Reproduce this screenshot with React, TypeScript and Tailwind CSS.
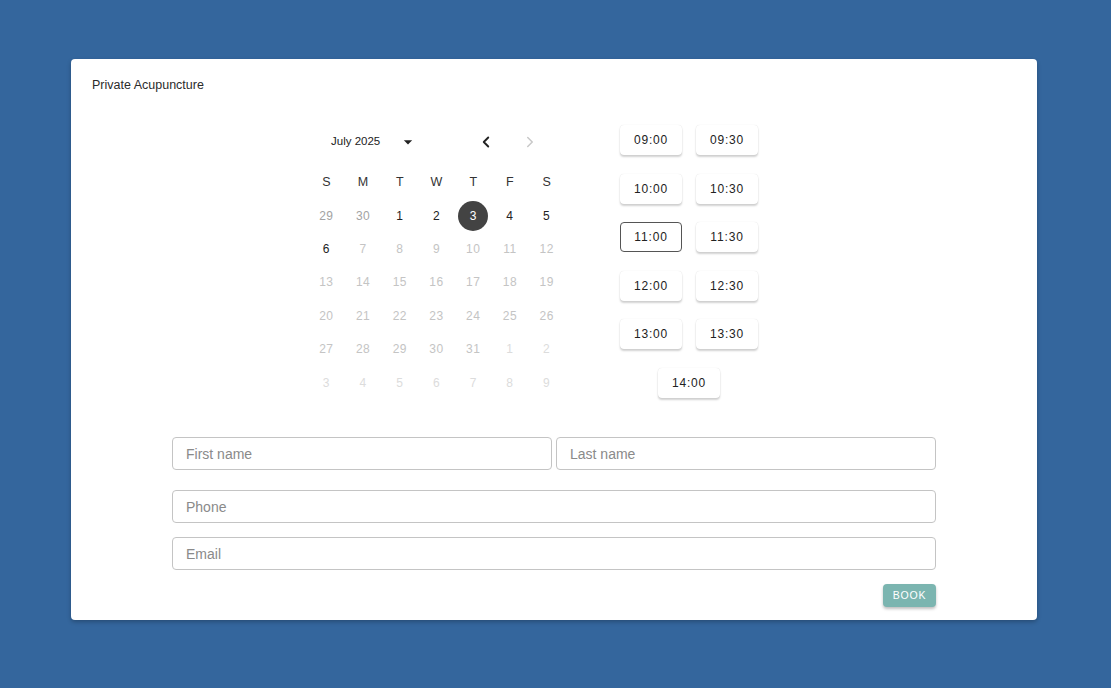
import { ChevronLeft, ChevronRight } from "lucide-react";

const weekDays = ["S", "M", "T", "W", "T", "F", "S"];

type Day = { n: number; tone: "prev" | "active" | "disabled" | "next" | "selected" };

const weeks: Day[][] = [
    [
        { n: 29, tone: "prev" },
        { n: 30, tone: "prev" },
        { n: 1, tone: "active" },
        { n: 2, tone: "active" },
        { n: 3, tone: "selected" },
        { n: 4, tone: "active" },
        { n: 5, tone: "active" },
    ],
    [
        { n: 6, tone: "active" },
        ...[7, 8, 9, 10, 11, 12].map((n) => ({ n, tone: "disabled" as const })),
    ],
    [13, 14, 15, 16, 17, 18, 19].map((n) => ({ n, tone: "disabled" as const })),
    [20, 21, 22, 23, 24, 25, 26].map((n) => ({ n, tone: "disabled" as const })),
    [
        ...[27, 28, 29, 30, 31].map((n) => ({ n, tone: "disabled" as const })),
        { n: 1, tone: "next" },
        { n: 2, tone: "next" },
    ],
    [3, 4, 5, 6, 7, 8, 9].map((n) => ({ n, tone: "next" as const })),
];

const toneClass: Record<Day["tone"], string> = {
    prev: "text-[#a3a3a3]",
    active: "text-[#222]",
    disabled: "text-[#c4c4c4]",
    next: "text-[#dcdcdc]",
    selected: "text-white",
};

const slots = ["09:00", "09:30", "10:00", "10:30", "11:00", "11:30", "12:00", "12:30", "13:00", "13:30"];

function Slot({ time, active }: { time: string; active?: boolean }) {
    return (
        <button
            className={
                "w-[62px] h-[30px] rounded-[4px] bg-white text-[12px] tracking-[0.07em] text-[#222] " +
                (active
                    ? "border border-[#555]"
                    : "shadow-[0_2px_2px_rgba(0,0,0,0.18),0_0_1px_rgba(0,0,0,0.15)]")
            }
        >
            {time}
        </button>
    );
}

function Field({ label }: { label: string }) {
    return (
        <input
            placeholder={label}
            className="w-full h-[33px] px-[13px] border border-[#c4c4c4] rounded-[4px] text-[14px] text-[#333] placeholder:text-[#8a8a8a] outline-none bg-white"
        />
    );
}

export default function App() {
    return (
        <div
            className="min-h-[688px] w-full bg-[#34669d] pt-[59px] pl-[71px]"
            style={{ fontFamily: '"Liberation Sans", Arial, sans-serif' }}
        >
            <div className="w-[966px] h-[561px] bg-white rounded-[4px] shadow-[0_2px_4px_rgba(0,0,0,0.25)] pt-[18px]">
                <div className="pl-[21px] text-[12.5px] leading-[16px] text-[#2b2b2b]">Private Acupuncture</div>

                <div className="flex mt-[32px] ml-[237px]">
                    {/* calendar */}
                    <div className="w-[257px]">
                        <div className="h-[34px] flex items-center text-[#222]">
                            <span className="ml-[23px] text-[11.5px]">July 2025</span>
                            <svg viewBox="0 0 24 24" className="w-[20px] h-[20px] ml-[18px] fill-[#222]">
                                <path d="M7 10l5 5 5-5z" />
                            </svg>
                            <ChevronLeft className="w-[18px] h-[18px] ml-[59px] text-[#222]" strokeWidth={2.5} />
                            <ChevronRight className="w-[18px] h-[18px] ml-[26px] text-[#c8c8c8]" strokeWidth={2} />
                        </div>
                        <div className="grid grid-cols-7 mt-[6px] h-[34px] items-center text-[12.5px] text-[#333]">
                            {weekDays.map((d, i) => (
                                <div key={i} className="text-center">{d}</div>
                            ))}
                        </div>
                        {weeks.map((week, wi) => (
                            <div key={wi} className="grid grid-cols-7 h-[33.4px] items-center text-[12px] tracking-[0.04em]">
                                {week.map((d, di) => (
                                    <div key={di} className="flex justify-center">
                                        <span
                                            className={
                                                "w-[30px] h-[30px] rounded-full flex items-center justify-center " +
                                                toneClass[d.tone] +
                                                (d.tone === "selected" ? " bg-[#434343]" : "")
                                            }
                                        >
                                            {d.n}
                                        </span>
                                    </div>
                                ))}
                            </div>
                        ))}
                    </div>

                    {/* time slots */}
                    <div className="ml-[55px] w-[138px] flex flex-col items-center gap-[18.5px]">
                        {[0, 2, 4, 6, 8].map((i) => (
                            <div key={i} className="flex gap-[14px]">
                                <Slot time={slots[i]} active={slots[i] === "11:00"} />
                                <Slot time={slots[i + 1]} />
                            </div>
                        ))}
                        <Slot time="14:00" />
                    </div>
                </div>

                <div className="mx-[101px] mt-[38px]">
                    <div className="flex gap-[4px]">
                        <Field label="First name" />
                        <Field label="Last name" />
                    </div>
                    <div className="mt-[20px]">
                        <Field label="Phone" />
                    </div>
                    <div className="mt-[14px]">
                        <Field label="Email" />
                    </div>
                    <div className="mt-[14px] flex justify-end">
                        <button className="h-[23px] w-[53px] rounded-[4px] bg-[#7bb5b0] text-white text-[10.5px] tracking-[0.08em] shadow-[0_2px_3px_rgba(0,0,0,0.25)]">
                            BOOK
                        </button>
                    </div>
                </div>
            </div>
        </div>
    );
}
